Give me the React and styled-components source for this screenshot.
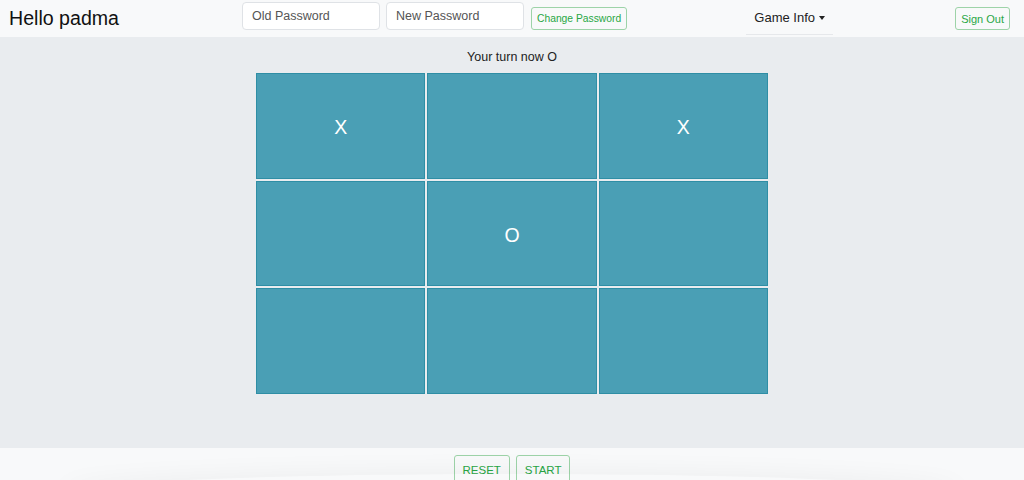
import styled, { createGlobalStyle } from "styled-components";

const GlobalStyle = createGlobalStyle`
  html, body {
    margin: 0;
    padding: 0;
    background: #e9ecef;
    font-family: "Liberation Sans", Arial, sans-serif;
    color: #212529;
  }
  * { box-sizing: border-box; }
`;

const Page = styled.div`
  width: 1024px;
  height: 480px;
  display: flex;
  flex-direction: column;
  overflow: hidden;
`;

const Navbar = styled.nav`
  height: 37px;
  background: #f8f9fa;
  display: flex;
  align-items: center;
  padding: 0 14px 0 9px;
`;

const Brand = styled.div`
  font-size: 19.6px;
  color: #111;
  width: 233px;
`;

const Form = styled.div`
  display: flex;
  align-items: center;
  gap: 6px;
`;

const Input = styled.input`
  width: 138px;
  height: 28px;
  border: 1px solid #dfe2e6;
  border-radius: 4px;
  background: #fff;
  padding: 0 9px;
  font-family: inherit;
  font-size: 12.5px;
  margin-top: -6px;
  &::placeholder { color: #555; }
`;

const OutlineButton = styled.button`
  height: ${(p) => p.$h || 23}px;
  padding: 0 ${(p) => p.$px || 5}px;
  border: 1px solid #9dd3a8;
  border-radius: 3px;
  background: transparent;
  color: #28a745;
  font-family: inherit;
  font-size: ${(p) => p.$fs || 10.3}px;
  margin-left: ${(p) => p.$ml || 0}px;
`;

const Spacer = styled.div`
  flex: 1;
`;

const Dropdown = styled.div`
  width: 87px;
  height: 31px;
  margin-right: 122px;
  margin-top: 1px;
  border-bottom: 1px solid #e6e8eb;
  display: flex;
  align-items: center;
  justify-content: center;
  font-size: 13px;
  color: #222;
  padding-bottom: 2px;
`;

const Caret = styled.span`
  display: inline-block;
  margin-left: 4px;
  border-top: 4px solid #222;
  border-left: 3.5px solid transparent;
  border-right: 3.5px solid transparent;
  vertical-align: middle;
`;

const Main = styled.main`
  flex: 1;
  display: flex;
  flex-direction: column;
  align-items: center;
  padding-top: 13px;
`;

const Status = styled.div`
  font-size: 12.5px;
  color: #222;
  height: 23px;
`;

const Board = styled.div`
  width: 512px;
  height: 321px;
  display: grid;
  grid-template-columns: repeat(3, 1fr);
  grid-template-rows: repeat(3, 1fr);
  gap: 2px;
`;

const Cell = styled.div`
  background: #4a9fb5;
  border: 1px solid #2f8ea5;
  display: flex;
  align-items: center;
  justify-content: center;
  padding-top: 4px;
  color: #fff;
  font-size: 19.5px;
`;

const Footer = styled.footer`
  height: 32px;
  background: #f8f9fa;
  display: flex;
  justify-content: center;
  gap: 6px;
  padding-top: 7px;
  position: relative;
  &::after {
    content: "";
    position: absolute;
    left: 60px;
    right: 60px;
    bottom: -34px;
    height: 40px;
    border-radius: 50%;
    box-shadow: 0 -4px 24px rgba(0, 0, 0, 0.045);
  }
`;

const cells = ["X", "", "X", "", "O", "", "", "", ""];

const App = () => {
  return (
    <Page>
      <GlobalStyle />
      <Navbar>
        <Brand>Hello padma</Brand>
        <Form>
          <Input placeholder="Old Password" />
          <Input placeholder="New Password" />
          <OutlineButton $ml={1}>Change Password</OutlineButton>
        </Form>
        <Spacer />
        <Dropdown>
          Game Info<Caret />
        </Dropdown>
        <OutlineButton $fs={11}>Sign Out</OutlineButton>
      </Navbar>
      <Main>
        <Status>Your turn now O</Status>
        <Board>
          {cells.map((c, i) => (
            <Cell key={i}>{c}</Cell>
          ))}
        </Board>
      </Main>
      <Footer>
        <OutlineButton $h={30} $px={8} $fs={11.5}>RESET</OutlineButton>
        <OutlineButton $h={30} $px={8} $fs={11.5}>START</OutlineButton>
      </Footer>
    </Page>
  );
};

export default App;
